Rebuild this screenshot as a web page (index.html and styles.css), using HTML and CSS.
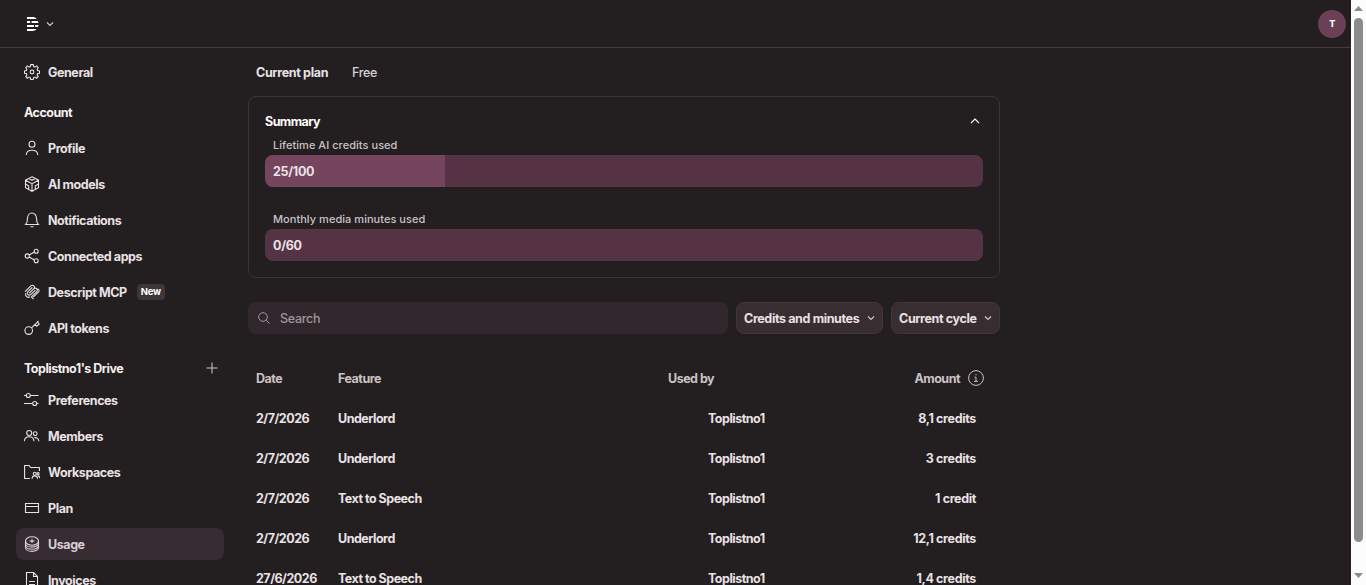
FILE: index.html
```html
<!DOCTYPE html>
<html lang="en">

<head>
  <meta charset="UTF-8">
  <meta name="viewport" content="width=device-width, initial-scale=1.0">
  <title>Usage</title>
  <link rel="stylesheet" href="styles.css">
</head>

<body>
  <div class="app">
    <header class="topbar">
      <div class="logo">
        <svg width="16" height="16" viewBox="0 0 16 16" fill="none">
          <path d="M3 1h5.500c1.800 0 3.200.6 4.200 1.900H3zM3 5h3.200v2H3zM7.600 5h6.400l.6 2h-7zM3 9h7v2H3zM11.200 9h3.400l-.6 2h-2.800zM3 13.100h9.700C11.600 14.400 10.200 15 8.500 15H3z" fill="#fff" stroke="none" />
        </svg>
        <svg class="chevron" width="8" height="8" viewBox="0 0 8 8"><path d="M1 2.500l3 3 3-3" /></svg>
      </div>
      <div class="avatar">T</div>
    </header>

    <div class="layout">
      <nav class="sidebar">
        <a class="item">
          <svg class="icon" viewBox="0 0 16 16"><path d="M6.700.6h2.600l.4 2 1.200.5 1.800-1.200 1.500 1.600-1.100 1.700.5 1.300 1.900.4v2.300l-1.900.4-.5 1.300 1.100 1.700-1.600 1.600-1.700-1.100-1.300.5-.4 1.900H6.700l-.4-1.900-1.300-.5-1.700 1.100-1.500-1.600 1.100-1.700-.5-1.300-1.900-.4V6.900l1.900-.4.5-1.300-1.100-1.700 1.500-1.600L5 3.100l1.300-.5z" /><circle cx="8" cy="8" r="1.900" /></svg>
          <span>General</span>
        </a>
        <div class="heading"><span>Account</span></div>
        <a class="item">
          <svg class="icon" viewBox="0 0 16 16"><circle cx="8" cy="4.200" r="3" /><path d="M2.200 15c.2-3.300 2.500-4.700 5.800-4.700s5.600 1.400 5.800 4.700" /></svg>
          <span>Profile</span>
        </a>
        <a class="item">
          <svg class="icon" viewBox="0 0 16 16"><path d="M8 .8l6.500 3.400v7.500L8 15.300l-6.500-3.600V4.200zM1.500 4.200L8 7.700l6.500-3.500M8 7.700v7.600M4.700 2.500L8 4.300l3.300-1.800M1.500 8l3.200 1.800v3.600M14.500 8l-3.200 1.800v3.600" /></svg>
          <span>AI models</span>
        </a>
        <a class="item">
          <svg class="icon" viewBox="0 0 16 16"><path d="M1.700 12.500h12.600c-1.500-1.400-1.800-2.800-1.800-6C12.500 3.300 10.600 1 8 1S3.500 3.300 3.500 6.500c0 3.200-.3 4.600-1.800 6zM6.400 14.700h3.200" /></svg>
          <span>Notifications</span>
        </a>
        <a class="item">
          <svg class="icon" viewBox="0 0 16 16"><circle cx="3.300" cy="8" r="2.100" /><circle cx="12.200" cy="3.200" r="2" /><circle cx="12.200" cy="12.800" r="2" /><path d="M5.200 7l5.200-2.900M5.200 9l5.200 2.900" /></svg>
          <span>Connected apps</span>
        </a>
        <a class="item">
          <svg class="icon" viewBox="0 0 16 16"><path d="M1 7.600l5.900-5.800a2 2 0 0 1 2.900 0 2 2 0 0 1 0 2.900L5.200 9.300M5.300 9.200l4.500-4.500a2 2 0 0 1 2.900 0 2 2 0 0 1 0 2.900l-5.300 5.300 2.100 2.300M8.300 3.300L3.900 7.700a2 2 0 0 0 0 2.900 2 2 0 0 0 2.900 0l4.500-4.400M1.800 9.200a2.500 2.500 0 0 0 .6 3.200 2.600 2.600 0 0 0 3.500.2M12.800 4.700a2 2 0 0 1 2 2.900L9.200 13.200" /></svg>
          <span>Descript MCP</span>
          <span class="badge">New</span>
        </a>
        <a class="item">
          <svg class="icon" viewBox="0 0 16 16"><circle cx="4.700" cy="10.600" r="3.800" /><path d="M7.500 7.900l6-5.800M11 4.400l1.800 1.900 2.400-2.300-2-2.200M13.200 1.800l1.500-.6" /></svg>
          <span>API tokens</span>
        </a>
        <div class="heading drive">
          <span>Toplistno1's Drive</span>
          <svg class="plus" width="12" height="12" viewBox="0 0 12 12"><path d="M6 .5v11M.5 6h11" /></svg>
        </div>
        <a class="item">
          <svg class="icon" viewBox="0 0 16 16"><circle cx="4.300" cy="3.500" r="2" /><circle cx="10.700" cy="11.500" r="2" /><path d="M0 3.500h2.300M6.300 3.500h8.200M0 11.500h8.700M12.700 11.500h1.800" /></svg>
          <span>Preferences</span>
        </a>
        <a class="item">
          <svg class="icon" viewBox="0 0 16 16"><circle cx="5.200" cy="5" r="2.500" /><circle cx="11.200" cy="5.700" r="1.900" /><path d="M.3 13.300c.2-3 1.900-4.500 4.900-4.500s4.600 1.500 4.800 4.500M10.300 9.700c2.700-.3 4.300.9 4.500 3.600" /></svg>
          <span>Members</span>
        </a>
        <a class="item">
          <svg class="icon" viewBox="0 0 16 16"><path d="M5.800 14.500H.6v-13h4.500l1.500 2h8.800v3.600" /><circle cx="10.800" cy="9.700" r="1.500" /><circle cx="14" cy="9.700" r="1.100" /><path d="M8 14.800c.1-2 1-2.900 2.800-2.900s2.700.9 2.800 2.900M13.500 11.700c1.500 0 2.200.8 2.300 2.400" /></svg>
          <span>Workspaces</span>
        </a>
        <a class="item">
          <svg class="icon" viewBox="0 0 16 16"><path d="M1.500 3.500h13v9h-13zM1.500 6.500h13" /></svg>
          <span>Plan</span>
        </a>
        <a class="item active">
          <svg class="icon" viewBox="0 0 16 16"><ellipse cx="8" cy="5" rx="6.500" ry="4.200" /><path d="M1.500 5v2.200c0 2.300 2.900 3.900 6.500 3.900s6.500-1.600 6.500-3.900V5M1.500 7.500v2c0 2.200 2.900 3.800 6.500 3.800s6.500-1.600 6.500-3.800v-2M1.500 9.700v1.800c0 2.300 2.900 3.900 6.500 3.900s6.500-1.600 6.500-3.900V9.700" /><path d="M8 2.600l.8 1.700 2.700.7-2.700.7L8 7.400l-.8-1.700L4.500 5l2.700-.7z" fill="currentColor" stroke="none" /></svg>
          <span>Usage</span>
        </a>
        <a class="item">
          <svg class="icon" viewBox="0 0 16 16"><path d="M2.500.5h7l4 4v11h-11zM9.500.5v4h4M5 9.500h6M5 12.500h6" /></svg>
          <span>Invoices</span>
        </a>
      </nav>

      <main class="content">
        <div class="plan">
          <span class="plan-label">Current plan</span>
          <span class="plan-name">Free</span>
        </div>

        <section class="summary">
          <div class="summary-head">
            <span>Summary</span>
            <svg class="chevron up" width="10" height="8" viewBox="0 0 10 8"><path d="M1 6l4-4 4 4" /></svg>
          </div>
          <div class="meter-label">Lifetime AI credits used</div>
          <div class="meter"><div class="fill" style="width: 25%"></div><span>25/100</span></div>
          <div class="meter-label second">Monthly media minutes used</div>
          <div class="meter"><div class="fill" style="width: 0%"></div><span>0/60</span></div>
        </section>

        <div class="filters">
          <div class="search">
            <svg width="12" height="12" viewBox="0 0 12 12"><circle cx="5" cy="5" r="4.300" /><path d="M8.200 8.200l3.400 3.400" /></svg>
            <span>Search</span>
          </div>
          <div class="select credits">
            <span>Credits and minutes</span>
            <svg class="chevron" width="8" height="8" viewBox="0 0 8 8"><path d="M1 2.500l3 3 3-3" /></svg>
          </div>
          <div class="select cycle">
            <span>Current cycle</span>
            <svg class="chevron" width="8" height="8" viewBox="0 0 8 8"><path d="M1 2.500l3 3 3-3" /></svg>
          </div>
        </div>

        <div class="table">
          <div class="row head">
            <span>Date</span><span>Feature</span><span>Used by</span>
            <span class="amount">Amount
              <svg class="info" width="16" height="16" viewBox="0 0 16 16"><circle cx="8" cy="8" r="7.400" /><path d="M6.500 7.200H8v4M6 11.300h4M7.400 4.700h1.200" /></svg>
            </span>
          </div>
          <div class="row"><span>2/7/2026</span><span>Underlord</span><span class="user">Toplistno1</span><span class="amount">8,1 credits</span></div>
          <div class="row"><span>2/7/2026</span><span>Underlord</span><span class="user">Toplistno1</span><span class="amount">3 credits</span></div>
          <div class="row"><span>2/7/2026</span><span>Text to Speech</span><span class="user">Toplistno1</span><span class="amount">1 credit</span></div>
          <div class="row"><span>2/7/2026</span><span>Underlord</span><span class="user">Toplistno1</span><span class="amount">12,1 credits</span></div>
          <div class="row"><span>27/6/2026</span><span>Text to Speech</span><span class="user">Toplistno1</span><span class="amount">1,4 credits</span></div>
        </div>
      </main>
    </div>
  </div>

  <div class="scrollbar">
    <svg width="9" height="5" viewBox="0 0 9 5"><path d="M0 5l4.500-5L9 5z" /></svg>
    <div class="thumb"></div>
    <svg width="9" height="5" viewBox="0 0 9 5"><path d="M0 0l4.500 5L9 0z" /></svg>
  </div>
</body>

</html>
```
FILE: styles.css
```css
* {
  box-sizing: border-box;
}

body {
  margin: 0;
  height: 585px;
  display: flex;
  overflow: hidden;
  background: #231e20;
  color: #e9e2e5;
  font-family: Inter, "Liberation Sans", sans-serif;
  font-size: 12.5px;
  font-weight: 650;
  line-height: 17px;
  letter-spacing: -0.42px;
}

svg {
  flex: none;
  fill: none;
  stroke: currentColor;
}

.app {
  width: 1351px;
  height: 585px;
  overflow: hidden;
}

.topbar {
  height: 48px;
  padding: 0 5px 0 24px;
  border-bottom: 1px solid #423c3f;
  display: flex;
  align-items: center;
  justify-content: space-between;
}

.logo {
  display: flex;
  align-items: center;
  gap: 6px;
}

.chevron {
  stroke: #cfc6ca;
  stroke-width: 1.2;
}

.avatar {
  width: 28px;
  height: 28px;
  border-radius: 50%;
  background: #6b3f56;
  color: #fff;
  font-size: 9px;
  font-weight: 800;
  line-height: 28px;
  text-align: center;
}

.layout {
  display: flex;
}

/* Sidebar */
.sidebar {
  width: 240px;
  flex: none;
  padding: 8px 16px;
}

.item {
  display: flex;
  align-items: center;
  gap: 8px;
  height: 32px;
  margin-bottom: 4px;
  padding: 0 8px;
  border-radius: 8px;
}

.item.active {
  background: #382c33;
  color: #dccdd5;
}

.icon {
  width: 16px;
  height: 16px;
  stroke-width: 1.1;
}

.badge {
  height: 16px;
  margin-left: 2px;
  padding: 0 4px;
  border-radius: 4px;
  background: #3c3539;
  color: #fff;
  font-size: 9.5px;
  font-weight: 700;
  line-height: 16px;
  letter-spacing: -0.3px;
}

.heading {
  display: flex;
  align-items: center;
  justify-content: space-between;
  height: 32px;
  margin: 8px 0 4px;
  padding: 0 6px 0 8px;
  color: #f5f0f2;
  letter-spacing: -0.5px;
}

.heading.drive {
  margin-bottom: 0;
}

.plus {
  stroke: #cfc6ca;
}

/* Content */
.content {
  width: 752px;
  margin-left: 8px;
  padding-top: 8px;
}

.plan {
  display: flex;
  align-items: center;
  gap: 24px;
  height: 32px;
  padding: 0 8px;
}

.plan-label {
  letter-spacing: -0.33px;
}

.plan-name {
  font-weight: 500;
  color: #d8cfd3;
  letter-spacing: -0.33px;
}

.summary {
  height: 182px;
  margin-top: 8px;
  padding: 16px;
  border: 1px solid #3b3538;
  border-radius: 8px;
}

.summary-head {
  display: flex;
  align-items: center;
  justify-content: space-between;
  height: 16px;
  padding-right: 3px;
  color: #fff;
  letter-spacing: -0.55px;
}

.chevron.up {
  stroke: #fff;
}

.meter-label {
  height: 16px;
  margin: 8px 8px 2px;
  color: #cbc2c6;
  font-size: 11px;
  font-weight: 500;
  line-height: 16px;
  letter-spacing: 0.04px;
}

.meter-label.second {
  margin-top: 24px;
}

.meter {
  display: grid;
  align-items: center;
  height: 32px;
  border-radius: 8px;
  overflow: hidden;
  background: #553344;
}

.meter > * {
  grid-area: 1 / 1;
}

.meter span {
  padding-left: 8px;
  letter-spacing: -0.3px;
}

.fill {
  height: 32px;
  background: #75445d;
}

.filters {
  display: flex;
  gap: 8px;
  margin-top: 24px;
}

.search {
  flex: 1;
  display: flex;
  align-items: center;
  gap: 10px;
  height: 32px;
  padding: 0 10px;
  border-radius: 8px;
  background: #30282c;
  color: #a0979b;
  font-weight: 500;
  letter-spacing: -0.3px;
}

.select {
  display: flex;
  align-items: center;
  justify-content: space-between;
  height: 32px;
  padding: 0 7px;
  border: 1px solid #403539;
  border-radius: 8px;
  background: #382e32;
  letter-spacing: -0.37px;
}

.credits {
  width: 147px;
}

.cycle {
  width: 109px;
}

.table {
  margin-top: 24px;
}

.row {
  display: grid;
  grid-template-columns: 82px 330px 164px 144px;
  align-items: center;
  height: 40px;
  padding: 0 8px;
  letter-spacing: -0.5px;
}

.head {
  color: #cbc2c6;
}

.user {
  padding-left: 40px;
}

.amount {
  text-align: right;
  letter-spacing: -0.35px;
}

.head .amount {
  display: flex;
  align-items: center;
  justify-content: flex-end;
  gap: 8px;
  margin-right: -8px;
  letter-spacing: -0.5px;
}

/* Scrollbar */
.scrollbar {
  width: 15px;
  flex: none;
  display: flex;
  flex-direction: column;
  align-items: center;
  justify-content: space-between;
  padding: 6px 0 7px;
  background: #fcfcfc;
}

.scrollbar svg {
  fill: #8b8b8b;
  stroke: none;
}

.thumb {
  width: 9px;
  height: 524px;
  margin-bottom: 25px;
  border-radius: 5px;
  background: #8b8b8b;
}
```
